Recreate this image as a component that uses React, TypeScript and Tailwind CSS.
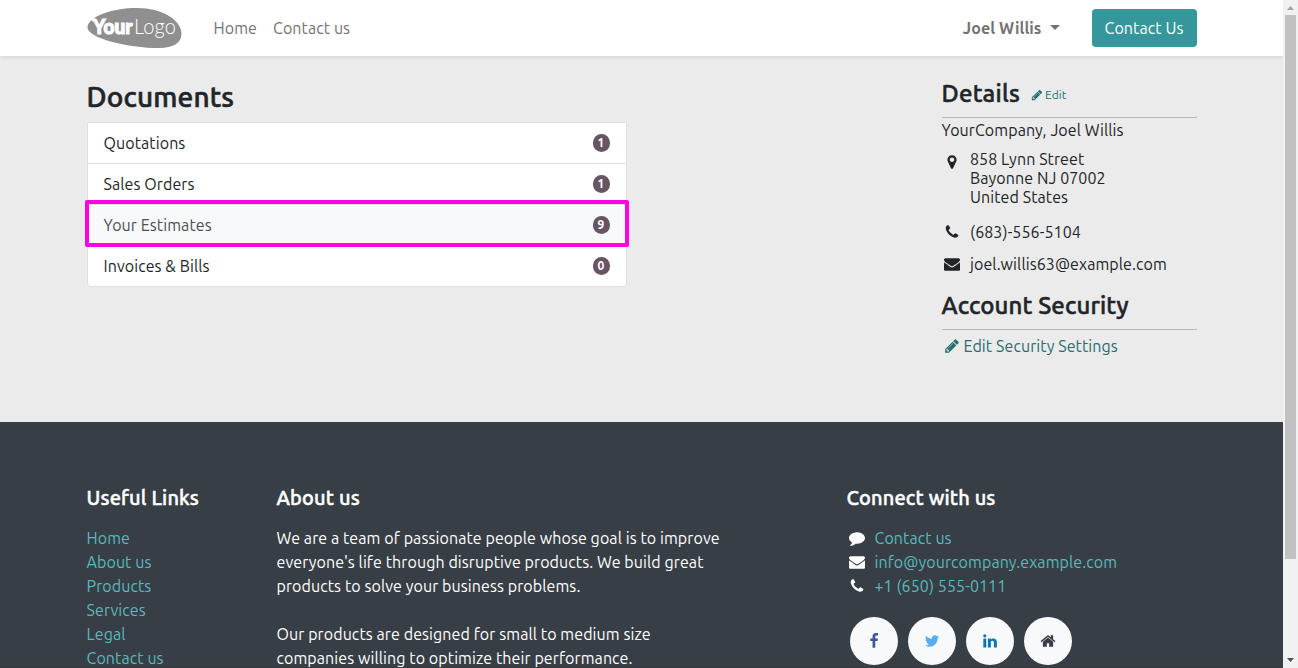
import type { ReactNode } from 'react';

const ICONS = {
  pencil:
    'M491 1536l91-91-235-235-91 91v107h128v128h107zm523-928q0-22-22-22-10 0-17 7l-542 542q-7 7-7 17 0 22 22 22 10 0 17-7l542-542q7-7 7-17zm-54-192l416 416-832 832h-416v-416zm683 96q0 53-37 90l-166 166-416-416 166-165q36-38 90-38 53 0 91 38l235 234q37 39 37 91z',
  marker:
    'M1152 640q0-106-75-181t-181-75-181 75-75 181 75 181 181 75 181-75 75-181zm256 0q0 109-33 179l-364 774q-16 33-47.5 52t-67.5 19-67.5-19-46.5-52l-365-774q-33-70-33-179 0-212 150-362t362-150 362 150 150 362z',
  phone:
    'M1600 1240q0 27-10 70.5t-21 68.5q-21 50-122 106-94 51-186 51-27 0-53-3.5t-57.5-12.5-47-14.5-55.5-20.5-49-18q-98-35-175-83-127-79-264-216t-216-264q-48-77-83-175-3-9-18-49t-20.5-55.5-14.5-47-12.5-57.5-3.5-53q0-92 51-186 56-101 106-122 25-11 68.5-21t70.5-10q14 0 21 3 18 6 53 76 11 19 30 54t35 63.5 31 53.5q3 4 17.5 25t21.5 35.5 7 28.5q0 20-28.5 50t-62 55-62 53-28.5 46q0 9 5 22.5t8.5 20.5 14 24 11.5 19q76 137 174 235t235 174q2 1 19 11.5t24 14 20.5 8.500 22.5 5q18 0 46-28.5t53-62 55-62 50-28.5q14 0 28.5 7t35.5 21.5 25 17.5q25 15 53.5 31t63.5 35 54 30q70 35 76 53 3 7 3 21z',
  envelope:
    'M1792 710v794q0 66-47 113t-113 47h-1472q-66 0-113-47t-47-113v-794q44 49 101 87 362 246 497 345 57 42 92.5 65.5t94.5 48 110 24.5h2q51 0 110-24.5t94.5-48 92.5-65.5q170-123 498-345 57-39 100-87zm0-294q0 79-49 151t-122 123q-376 261-468 325-10 7-42.5 31t-54 38.5-52 32.5-57.5 27-50 9h-2q-23 0-50-9t-57.5-27-52-32.5-54-38.5-42.5-31q-91-64-262-182.5t-205-142.5q-62-42-117-115.5t-55-136.5q0-78 41.5-130t118.5-52h1472q65 0 112.5 47t47.500 113z',
  comment:
    'M1792 896q0 174-120 321.5t-326 233-450 85.5q-70 0-145-8-198 175-460 242-49 14-114 22-17 2-30.5-9t-17.5-29v-1q-3-4-.5-12t2-10 4.5-9.5l6-9 7-8.5 8-9q7-8 31-34.5t34.5-38 31-39.5 32.5-51 27-59 26-76q-157-89-247.5-220t-90.5-281q0-130 71-248.5t191-204.5 286-136.5 348-50.5q244 0 450 85.5t326 233 120 321.5z',
  facebook:
    'M1343 12v264h-157q-86 0-116 36t-30 108v189h293l-39 296h-254v759h-306v-759h-255v-296h255v-218q0-186 104-288.5t277-102.5q147 0 228 12z',
  twitter:
    'M1684 408q-67 98-162 167 1 14 1 42 0 130-38 259.5t-115.5 248.5-184.5 210.5-258 146-323 54.5q-271 0-496-145 35 4 78 4 225 0 401-138-105-2-188-64.5t-114-159.5q33 5 61 5 43 0 85-11-112-23-185.5-111.5t-73.5-205.5v-4q68 38 146 41-66-44-105-115t-39-154q0-88 44-163 121 149 294.5 238.5t371.5 99.5q-8-38-8-74 0-134 94.5-228.5t228.5-94.5q140 0 236 102 109-21 205-78-37 115-142 178 93-10 186-50z',
  linkedin:
    'M477 625v991h-330v-991h330zm21-306q1 73-50.5 122t-135.5 49h-2q-82 0-132-49t-50-122q0-74 51.5-122.5t134.5-48.5 133 48.5 51 122.5zm1166 729v568h-329v-530q0-105-40.5-164.5t-126.5-59.5q-63 0-105.5 34.5t-63.5 85.5q-11 30-11 81v553h-329q2-399 2-647t-1-296l-1-48h329v144h-2q20-32 41-56t56.5-52 87-43.5 114.5-15.5q171 0 275 113.5t104 332.5z',
  home:
    'M1472 992v480q0 26-19 45t-45 19h-384v-384h-256v384h-384q-26 0-45-19t-19-45v-480q0-1 .5-3t.5-3l575-474 575 474q1 2 1 6zm223-69l-62 74q-8 9-21 11h-3q-13 0-21-7l-692-577-692 577q-12 8-24 7-13-2-21-11l-62-74q-8-10-7-23.5t11-21.5l719-599q32-26 76-26t76 26l244 204v-195q0-14 9-23t23-9h192q14 0 23 9t9 23v408l219 182q10 8 11 21.5t-7 23.5z',
};

function Icon({ name, className }: { name: keyof typeof ICONS; className: string }) {
  return (
    <svg viewBox="0 0 1792 1792" fill="currentColor" className={`shrink-0 ${className}`} aria-hidden="true">
      <path d={ICONS[name]} />
    </svg>
  );
}

function Logo() {
  return (
    <svg viewBox="0 0 95 40" className="h-10 w-[95px] shrink-0">
      <path d="M.5 19C1.500 8 26 0 50 0c25 0 44.500 12 44.500 26 0 9-9 14-22 14C40 40-.5 29.500 .5 19z" fill="#8f8f8f" />
      <path d="M4 11.500l2.500-1.500 2.500 1.500-1 1.500-2.500.5z" fill="#fff" />
      <text x="6" y="25.500" textLength="39.500" lengthAdjust="spacingAndGlyphs" fill="#fff" stroke="#fff" strokeWidth="1.1" fontFamily="Lato, sans-serif" fontWeight="900" fontSize="20">Your</text>
      <text x="47" y="25.500" textLength="42" lengthAdjust="spacingAndGlyphs" fill="#fff" fontFamily="Lato, sans-serif" fontWeight="300" fontSize="21">Logo</text>
    </svg>
  );
}

const DOCUMENTS = [
  { label: 'Quotations', count: 1 },
  { label: 'Sales Orders', count: 1 },
  { label: 'Your Estimates', count: 9, active: true },
  { label: 'Invoices & Bills', count: 0 },
];

const LINKS = ['Home', 'About us', 'Products', 'Services', 'Legal', 'Contact us'];

function FooterHeading({ children }: { children: ReactNode }) {
  return (
    <h5 className="mb-4 text-xl leading-6 font-medium tracking-[0.16px] [-webkit-text-stroke:0.45px_currentColor]">{children}</h5>
  );
}

function ContactRow({ icon, children }: { icon: keyof typeof ICONS; children: ReactNode }) {
  return (
    <div className="flex h-6 items-center">
      <span className="flex w-5 justify-center"><Icon name={icon} className="size-4" /></span>
      <a className="ml-2 text-[#56b9bd]">{children}</a>
    </div>
  );
}

function Social({ icon, className }: { icon: keyof typeof ICONS; className: string }) {
  return (
    <a className={`flex size-12 items-center justify-center rounded-full bg-[#f8f9fa] ${className}`}>
      <Icon name={icon} className="size-4" />
    </a>
  );
}

export default function App() {
  return (
    <div className="flex h-[668px] w-[1298px] overflow-hidden bg-[#ebebeb] font-[Ubuntu,'Noto_Sans',sans-serif] text-base leading-6 tracking-[0.09px] text-[#212529]">
      <div className="flex h-full w-[1283px] flex-col overflow-hidden">
        <header className="z-10 h-14 shrink-0 bg-white shadow-[0_2px_4px_rgba(0,0,0,0.075)]">
          <div className="mx-auto flex h-full w-[1110px] items-center text-[#737373]">
            <Logo />
            <a className="ml-8">Home</a>
            <a className="ml-4">Contact us</a>
            <div className="ml-auto flex items-center font-bold">
              Joel Willis
              <svg viewBox="0 0 10 5" className="mb-0.5 ml-2 h-[5px] w-[10px]" fill="currentColor"><path d="M0 0h10L5 5z" /></svg>
            </div>
            <button className="ml-8 h-[38px] w-[105px] rounded bg-[#35979c] text-white">Contact Us</button>
          </div>
        </header>

        <main className="mx-auto flex h-[366px] w-[1110px] shrink-0 justify-between">
          <section className="w-[540px] pt-6">
            <h3 className="mb-2 text-[28px] leading-[34px] font-medium tracking-[0.15px] [-webkit-text-stroke:0.6px_currentColor]">Documents</h3>
            <ul className="divide-y divide-[#dfdfdf] rounded-b border border-[#dfdfdf] bg-white">
              {DOCUMENTS.map((d) => (
                <li
                  key={d.label}
                  className={d.active ? 'relative flex h-[41px] items-center justify-between bg-[#f8f9fa] px-4 text-[#495057]' : 'flex h-[41px] items-center justify-between px-4 last:h-10'}
                >
                  <span>{d.label}</span>
                  <span className="flex h-[18px] w-[17px] items-center justify-center rounded-full bg-[#685563] text-xs leading-none font-bold text-white">{d.count}</span>
                  {d.active && <span className="absolute -inset-x-[3px] -top-[5px] h-[47px] rounded-[2px] border-4 border-[#ff00e6]" />}
                </li>
              ))}
            </ul>
          </section>

          <aside className="w-[255px] pt-[23px]">
            <div className="flex items-center border-b border-[#b9b9b9] pb-[9px] text-2xl leading-[29px]">
              <h4 className="font-medium tracking-[0.25px] [-webkit-text-stroke:0.5px_currentColor]">Details</h4>
              <a className="mt-[3px] ml-[11px] flex items-center gap-0.5 text-xs text-[#276e72]">
                <Icon name="pencil" className="size-3" />Edit
              </a>
            </div>
            <p>YourCompany, Joel Willis</p>
            <div className="mt-2 flex leading-[19px]">
              <span className="flex w-5 justify-center pt-1"><Icon name="marker" className="size-4" /></span>
              <p className="ml-[8.5px]">858 Lynn Street<br />Bayonne NJ 07002<br />United States</p>
            </div>
            <div className="mt-[13px] flex h-6 items-center">
              <span className="flex w-5 justify-center"><Icon name="phone" className="size-4" /></span>
              <span className="ml-[8.5px]">(683)-556-5104</span>
            </div>
            <div className="mt-2 flex h-6 items-center">
              <span className="flex w-5 justify-center"><Icon name="envelope" className="size-4" /></span>
              <span className="ml-[8.5px]">joel.willis63@example.com</span>
            </div>
            <h4 className="mt-[15px] border-b border-[#b9b9b9] pb-[9px] text-2xl leading-[29px] font-medium tracking-[0.12px] [-webkit-text-stroke:0.5px_currentColor]">Account Security</h4>
            <a className="mt-1 flex items-center gap-1 pl-0.5 text-[#276e72]">
              <Icon name="pencil" className="size-4" />Edit Security Settings
            </a>
          </aside>
        </main>

        <footer className="min-h-0 flex-1 overflow-hidden bg-[#383e45] pt-16 text-white">
          <div className="mx-auto flex w-[1110px]">
            <div className="w-[190px]">
              <FooterHeading>Useful Links</FooterHeading>
              <ul className="text-[#56b9bd]">{LINKS.map((l) => <li key={l}>{l}</li>)}</ul>
            </div>
            <div className="w-[570px]">
              <FooterHeading>About us</FooterHeading>
              <p className="w-[445px]">We are a team of passionate people whose goal is to improve everyone's life through disruptive products. We build great products to solve your business problems.</p>
              <p className="mt-6 w-[445px]">Our products are designed for small to medium size companies willing to optimize their performance.</p>
            </div>
            <div>
              <FooterHeading>Connect with us</FooterHeading>
              <ContactRow icon="comment">Contact us</ContactRow>
              <ContactRow icon="envelope">info@yourcompany.example.com</ContactRow>
              <ContactRow icon="phone">+1 (650) 555-0111</ContactRow>
              <div className="mt-[19px] ml-[3px] flex gap-2.5">
                <Social icon="facebook" className="text-[#3b5998]" />
                <Social icon="twitter" className="text-[#55acee]" />
                <Social icon="linkedin" className="text-[#0976b4]" />
                <Social icon="home" className="text-[#383e45]" />
              </div>
            </div>
          </div>
        </footer>
        <div className="h-px shrink-0 bg-[#353b41]" />
      </div>

      <div className="flex h-full w-[15px] flex-col items-center bg-[#f1f1f1]">
        <svg viewBox="0 0 15 15" className="size-[15px] shrink-0"><path d="M4 10l3.500-4 3.500 4z" fill="#a3a3a3" /></svg>
        <div className="h-[544px] w-[11px] bg-[#c1c1c1]" />
        <svg viewBox="0 0 15 15" className="mt-auto size-[15px] shrink-0"><path d="M4 5h7l-3.500 4z" fill="#505050" /></svg>
      </div>
    </div>
  );
}
